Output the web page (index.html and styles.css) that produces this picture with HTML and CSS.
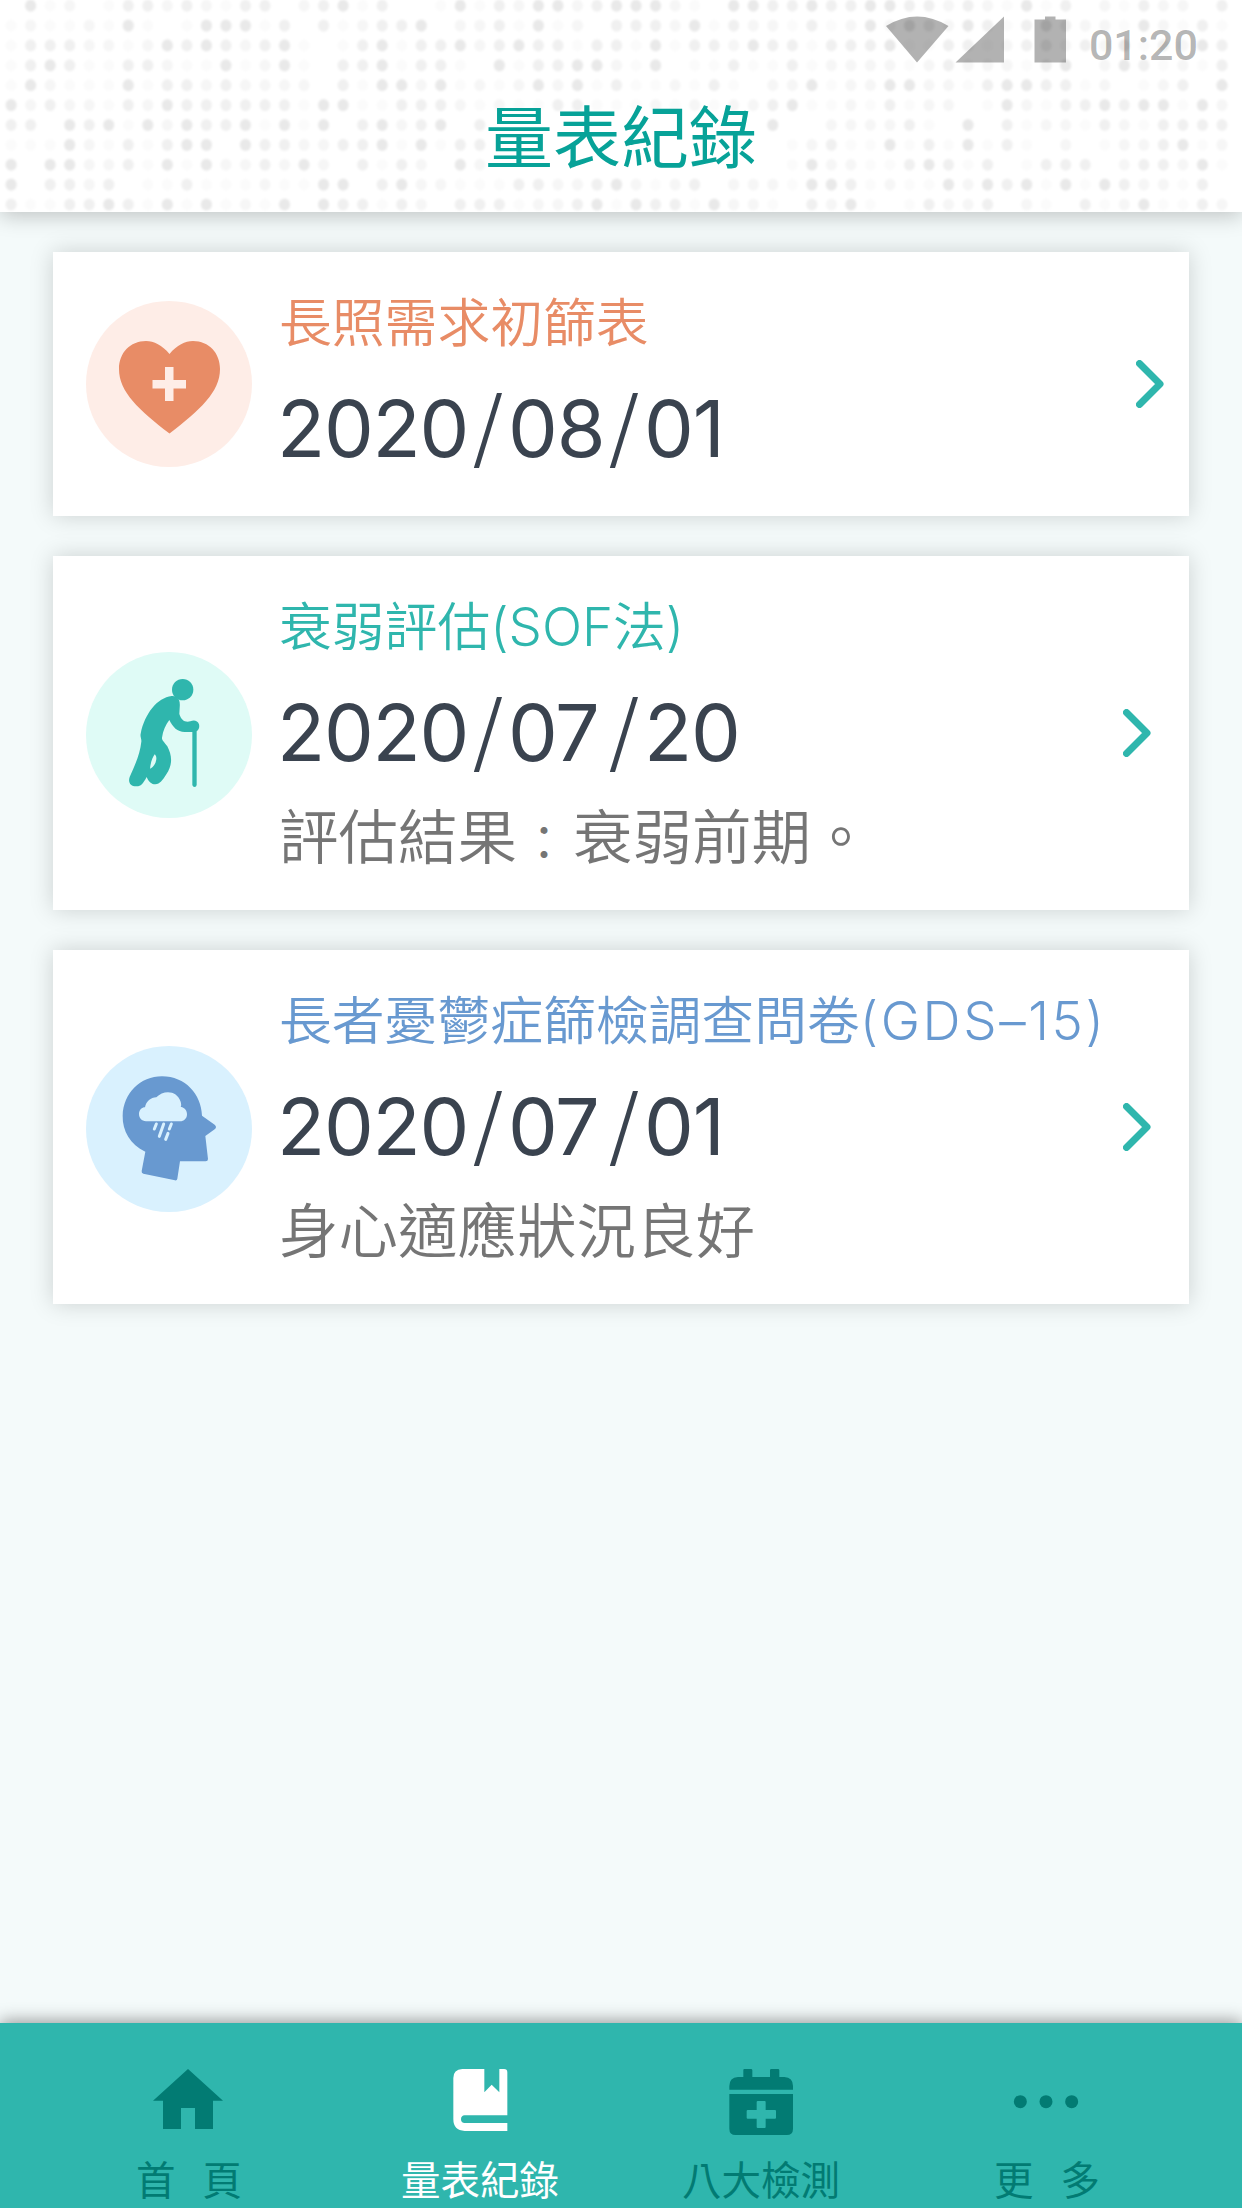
FILE: index.html
```html
<!DOCTYPE html>
<html lang="zh-Hant">
  <head>
    <meta charset="UTF-8">
    <meta name="viewport" content="width=device-width, initial-scale=1.0">
    <title>量表紀錄</title>
    <link rel="stylesheet" href="styles.css">
  </head>
  <body>
    <header class="header">
      <svg class="dots" id="dots" width="1242" height="212"></svg>
      <div class="status">
        <svg width="180" height="47" viewBox="0 0 180 47">
          <path d="M0 10 Q31 -9 62.500 10 L31 46.500Z M69.500 46.500 L118 0.500 V46.500Z M148.500 3.500 H159 V0.500 H169.500 V3.500 H180 V46.500 H148.500Z"/>
        </svg>
        <span class="clock">01:20</span>
      </div>
      <h1>量表紀錄</h1>
    </header>

    <main class="list">
      <div class="card orange">
        <svg class="icon" viewBox="0 0 166 166">
          <circle class="disc" cx="83" cy="83" r="83"/>
          <path class="shape" d="M83.500 53 C76 44 68 40 60 40 C44 40 33 52 33 68 C33 91 53 109 83.500 132.500 C114 109 134 91 134 68 C134 52 123 40 107 40 C99 40 91 44 83.500 53Z"/>
          <path class="disc" d="M79 66H87.500V79H100V87.500H87.500V100H79V87.500H66.500V79H79Z"/>
        </svg>
        <div class="info">
          <h2>長照需求初篩表</h2>
          <p class="day"><span class="year">2020</span><i>/</i><span>08</span><i>/</i><span>01</span></p>
        </div>
        <svg class="arrow" width="28" height="48" viewBox="0 0 28 48"><path d="M3.500 3.500L24 24L3.500 44.500"/></svg>
      </div>

      <div class="card tall green">
        <svg class="icon" viewBox="18 35 498 498">
          <circle class="disc" cx="267" cy="284" r="249"/>
          <circle class="shape" cx="308" cy="148" r="32"/>
          <path class="shape" d="M275 167 C232 172 194 220 182 280 C180 290 185 295 184 304 C180 340 167 370 149 410 C143 427 153 438 168 438 C182 439 188 432 200 410 C206 425 215 432 226 432 C240 431 247 421 259 402 C279 372 276 345 262 318 C253 306 245 300 246 292 C249 271 257 253 268 239 C278 260 292 275 314 275 L337 275 V434 Q338 440 344 440 Q349 440 350 434 V273 C357 268 359 260 357 252 C353 240 341 238 331 243 C315 247 304 240 298 221 C298 206 302 192 297 178 C291 171 284 166 275 167Z"/>
          <path class="disc" d="M224 342 C230 348 231 356 225 370 C221 378 215 382 210 385 C212 367 216 354 224 342Z"/>
        </svg>
        <div class="info">
          <h2>衰弱評估(SOF法)</h2>
          <p class="day"><span class="year">2020</span><i>/</i><span>07</span><i>/</i><span>20</span></p>
          <p class="result">評估結果<span class="colon">：</span>衰弱前期。</p>
        </div>
        <svg class="arrow" width="28" height="48" viewBox="0 0 28 48"><path d="M3.500 3.500L24 24L3.500 44.500"/></svg>
      </div>

      <div class="card tall blue">
        <svg class="icon" viewBox="18 32 498 498">
          <circle class="disc" cx="267" cy="281" r="249"/>
          <path class="shape" d="M246 123 C316 123 364 177 366 241 L404 268 Q412 275 404 282 L376 302 L384 371 Q384 378 377 378 H300 L292 430 Q291 436 285 435 L190 415 Q184 413 185 407 L196 349 C151 327 127 287 128 241 C130 174 181 123 246 123Z"/>
          <path class="disc" d="M198 258 C185 257 177 248 177 236 C177 224 186 216 195 216 C199 197 212 187 229 186 C250 163 291 164 302 199 Q305 211 302 214 C316 217 321 227 321 237 C321 250 312 258 300 258Z"/>
          <path class="rain" d="M229 266L223 281M251 266L238 303M274 266L268 281M264 294L257 312"/>
        </svg>
        <div class="info">
          <h2>長者憂鬱症篩檢調查問卷<span class="code">(GDS–15)</span></h2>
          <p class="day"><span class="year">2020</span><i>/</i><span>07</span><i>/</i><span>01</span></p>
          <p class="result">身心適應狀況良好</p>
        </div>
        <svg class="arrow" width="28" height="48" viewBox="0 0 28 48"><path d="M3.500 3.500L24 24L3.500 44.500"/></svg>
      </div>
    </main>

    <nav class="tabs">
      <a class="tab wide">
        <svg viewBox="159 171 210 210"><path d="M264 177L369 272H339V357H285V294H243V357H189V272H159Z"/></svg>
        <span>首頁</span>
      </a>
      <a class="tab active">
        <svg viewBox="1037 171 210 210"><path d="M1089 177H1155V247L1177 224L1200 247V177H1214Q1224 177 1224 187V316H1096Q1085 317 1085 328Q1085 339 1096 339H1224V363H1096Q1062 361 1062 328V204Q1062 178 1089 177Z"/></svg>
        <span>量表紀錄</span>
      </a>
      <a class="tab">
        <svg viewBox="256 171 210 210"><path d="M308 201V180Q308 177 311 177H331Q335 177 335 181V201H388V181Q388 177 392 177H412Q416 177 416 181V201H431Q457 203 457 228V239H266V228Q266 203 292 201Z"/><path d="M266 252H457V356Q457 375 438 375H285Q266 375 266 356Z M351 273Q348 273 348 276V300H321Q318 300 318 303V323Q318 326 321 326H348V351Q348 354 351 354H372Q375 354 375 351V326H403Q406 326 406 323V303Q406 300 403 300H375V276Q375 273 372 273Z" fill-rule="evenodd"/></svg>
        <span>八大檢測</span>
      </a>
      <a class="tab wide">
        <svg viewBox="1111 171 210 210"><circle cx="1139" cy="275" r="19.500"/><circle cx="1216" cy="275" r="19.500"/><circle cx="1293" cy="275" r="19.500"/></svg>
        <span>更多</span>
      </a>
    </nav>

    <script>
    // shade of every dot in the header, 0 = none, 4 = darkest
    const rows = [
      "041201332321330234130014132442344421044334334433232141302132203",
      "121121410144413031233402231412033324132213124243243134322142131",
      "133322124343234101341334234331331413324331333411331233232413243",
      "134311332114124103341331041334421401131131222212322213402431213",
      "142111413323222203144241212424131121310224122442213443312012304",
      "423221324333333144113332121133111212122341121312201421334344142",
      "330434142433414140342340300000000000000400222231040312213213333",
      "111421313440433223341413300000000000000012311413141310201223412",
      "404422314142232420313204200000000000000014221134313013330233241",
      "403323011311121144034221113322342123022214431211424341414322130",
      "311334314141214043313203331223414331422103241013223021031241132"
    ];
    const shades = [0, 0.015, 0.036, 0.058, 0.088];
    let dots = "";
    rows.forEach((row, y) => {
      [...row].forEach((level, x) => {
        if (level > 0) {
          dots += `<ellipse cx="${11.1 + x * 19.53}" cy="${5.7 + y * 19.88}" rx="5.6" ry="6.1" fill-opacity="${shades[level]}"/>`;
        }
      });
    });
    document.getElementById("dots").innerHTML = dots;
    </script>
  </body>
</html>
```

FILE: styles.css
```css
* {
  box-sizing: border-box;
  margin: 0;
  padding: 0;
}

body {
  background: #f4fafa;
  display: flex;
  flex-direction: column;
  font-family: Inter, "Noto Sans CJK TC", sans-serif;
  height: 2208px;
  overflow: hidden;
  width: 1242px;
}

h1, h2 {
  font-weight: normal;
}

.header {
  background: #fff;
  box-shadow: 0 4px 20px rgba(0, 0, 0, .22);
  height: 212px;
  position: relative;
}

.dots {
  filter: blur(.8px);
  left: 0;
  position: absolute;
  top: 0;
}

.status {
  align-items: flex-start;
  display: flex;
  fill: rgba(0, 0, 0, .3);
  gap: 23px;
  height: 86px;
  justify-content: flex-end;
  padding: 16px 44px 0 0;
  position: relative;
}

.clock {
  color: rgba(0, 0, 0, .3);
  font: 500 43px/58px Roboto, sans-serif;
}

.header h1 {
  color: #07a298;
  font-size: 68px;
  font-weight: 400;
  line-height: 105px;
  position: relative;
  text-align: center;
}

.list {
  display: flex;
  flex: 1;
  flex-direction: column;
  gap: 40px;
  padding: 40px 53px;
}

.card {
  align-items: center;
  background: #fff;
  box-shadow: 0 0 22px rgba(0, 0, 0, .17);
  display: flex;
  height: 264px;
  padding: 0 25px 0 33px;
}

.card.tall {
  height: 354px;
  padding-right: 38px;
}

.icon {
  flex: none;
  height: 166px;
  width: 166px;
}

.tall .icon {
  margin-top: 3px;
}

.info {
  align-self: flex-start;
  flex: 1;
  padding: 21px 0 0 27px;
  white-space: nowrap;
}

.card h2 {
  color: var(--main);
  font-size: 52.8px;
  font-weight: 350;
  line-height: 100px;
}

.code {
  letter-spacing: 2.6px;
}

.day {
  color: #3a434f;
  display: flex;
  font-size: 79px;
  font-weight: 380;
  height: 112px;
  letter-spacing: -1.2px;
  line-height: 110px;
  margin-left: -2px;
}

.day span {
  width: 95px;
}

.day .year {
  width: 190px;
}

.day i {
  font-family: "Noto Sans CJK TC", sans-serif;
  font-size: 77px;
  font-style: normal;
  font-weight: 400;
  line-height: 96px;
  text-align: center;
  width: 41px;
}

.result {
  color: #757575;
  font-size: 59.5px;
  font-weight: 350;
  line-height: 96px;
}

.colon {
  font-size: 48px;
  line-height: 1;
  margin: 0 5px 0 3px;
  vertical-align: -1px;
}

.orange {
  --main: #e88c66;
  --soft: #feede7;
}

.green {
  --main: #2fb6ad;
  --soft: #dffbf6;
}

.blue {
  --main: #6899d0;
  --soft: #d9f1fe;
}

.shape {
  fill: var(--main);
}

.disc {
  fill: var(--soft);
}

.rain {
  stroke: var(--soft);
  stroke-linecap: round;
  stroke-width: 9;
}

.arrow {
  fill: none;
  flex: none;
  stroke: #2fb6ad;
  stroke-linecap: round;
  stroke-linejoin: round;
  stroke-width: 7;
}

.tabs {
  background: #2fb6ad;
  box-shadow: 0 -2px 16px rgba(0, 0, 0, .4);
  display: grid;
  grid-template-columns: 286px 298px 264px 306px;
  height: 185px;
  padding: 44px 43px 0 45px;
}

.tab {
  align-items: center;
  color: #027b73;
  display: flex;
  fill: #027b73;
  flex-direction: column;
  font-size: 39.5px;
  gap: 19px;
  line-height: 50px;
}

.tab svg {
  height: 70px;
  width: 70px;
}

.tab.wide span {
  letter-spacing: 27px;
  margin-right: -29px;
}

.tab.active {
  color: #fff;
  fill: #fff;
}
```
